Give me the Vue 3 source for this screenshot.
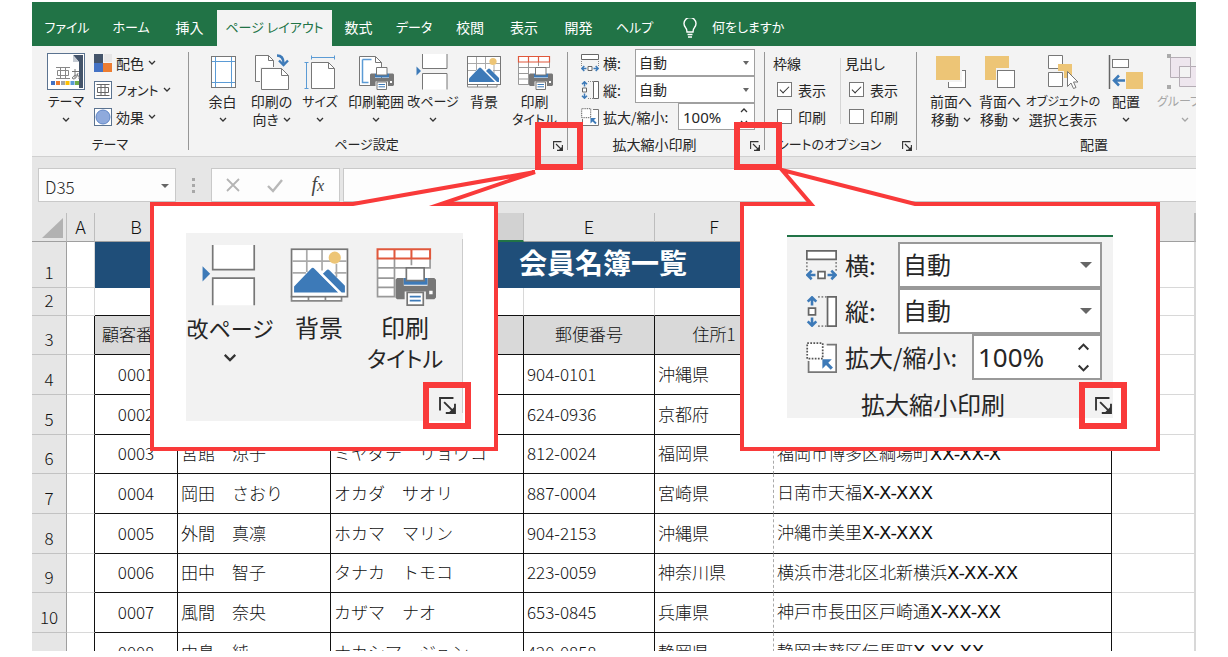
<script setup>
const tabs = ['ファイル', 'ホーム', '挿入', 'ページ レイアウト', '数式', 'データ', '校閲', '表示', '開発', 'ヘルプ']
const activeTab = 'ページ レイアウト'

// Labels made mostly of katakana are set slightly smaller than kanji ones.
const isKana = (text) => /[ァ-ヶー]{3}|サイズ/.test(text)

const smallButtons = [
  { icon: 'i-colors', label: '配色' },
  { icon: 'i-fonts', label: 'フォント' },
  { icon: 'i-effects', label: '効果' },
]

const pageSetup = [
  { icon: 'i-margins', lines: ['余白'], arrow: 'below' },
  { icon: 'i-orient', lines: ['印刷の', '向き'], arrow: 'inline' },
  { icon: 'i-size', lines: ['サイズ'], arrow: 'below' },
  { icon: 'i-area', lines: ['印刷範囲'], arrow: 'below' },
  { icon: 'i-break', lines: ['改ページ'], arrow: 'below' },
  { icon: 'i-background', lines: ['背景'] },
  { icon: 'i-titles', lines: ['印刷', 'タイトル'] },
]

const arrange = [
  { icon: 'i-front', lines: ['前面へ', '移動'], arrow: 'inline' },
  { icon: 'i-back', lines: ['背面へ', '移動'], arrow: 'inline' },
  { icon: 'i-select', lines: ['オブジェクトの', '選択と表示'] },
  { icon: 'i-align', lines: ['配置'], arrow: 'below' },
  { icon: 'i-group', lines: ['グループ化'], arrow: 'below', disabled: true },
]

const zoomed = [
  { icon: 'i-break', lines: ['改ページ'], arrow: 'below' },
  { icon: 'i-background', lines: ['背景'] },
  { icon: 'i-titles', lines: ['印刷', 'タイトル'] },
]

const optionGroups = [
  { key: 'grid', title: '枠線' },
  { key: 'head', title: '見出し' },
]

const columns = ['A', 'B', 'C', 'D', 'E', 'F', 'G', 'H']

const members = [
  { n: 4, id: '0001', name: '', kana: '', zip: '904-0101', pref: '沖縄県', city: '', no: '' },
  { n: 5, id: '0002', name: '', kana: '', zip: '624-0936', pref: '京都府', city: '', no: '' },
  { n: 6, id: '0003', name: '宮館　涼子', kana: 'ミヤダテ　リョウコ', zip: '812-0024', pref: '福岡県', city: '福岡市博多区綱場町', no: 'XX-XX-X' },
  { n: 7, id: '0004', name: '岡田　さおり', kana: 'オカダ　サオリ', zip: '887-0004', pref: '宮崎県', city: '日南市天福', no: 'X-X-XXX' },
  { n: 8, id: '0005', name: '外間　真凛', kana: 'ホカマ　マリン', zip: '904-2153', pref: '沖縄県', city: '沖縄市美里', no: 'X-X-XXX' },
  { n: 9, id: '0006', name: '田中　智子', kana: 'タナカ　トモコ', zip: '223-0059', pref: '神奈川県', city: '横浜市港北区北新横浜', no: 'X-XX-XX' },
  { n: 10, id: '0007', name: '風間　奈央', kana: 'カザマ　ナオ', zip: '653-0845', pref: '兵庫県', city: '神戸市長田区戸崎通', no: 'X-XX-XX' },
  { n: '', id: '0008', name: '中島　純', kana: 'ナカシマ　ジュン', zip: '420-0858', pref: '静岡県', city: '静岡市葵区伝馬町', no: 'X-XX-XX' },
]
</script>

<template>
  <div class="page">
    <svg class="defs" width="0" height="0" aria-hidden="true">
      <symbol id="i-chev" viewBox="0 0 8 5"><path d="M1 1l3 3 3-3" fill="none" stroke="#333" stroke-width="1.3" /></symbol>
      <symbol id="i-launch" viewBox="0 0 10 10">
        <path d="M.6 8V.6H8.500M3 3l5 5M9.400 4V9.400H4" fill="none" stroke="#333" stroke-width="1.100" />
        <path d="M9.400 5.500v3.900H5.500z" fill="#333" />
      </symbol>
      <symbol id="i-theme" viewBox="0 0 38 37">
        <rect x=".5" y=".5" width="37" height="36" fill="#fff" stroke="#5b7390" />
        <rect x="2" y="2" width="34" height="33" fill="#44546a" />
        <path d="M2 2h24l6 7v26H2z" fill="#fff" />
        <path d="M26 2v7h6z" fill="#c5cbd3" />
        <path d="M9 14.500h14M9 25.500h14M13.500 14.500v11M18.500 14.500v11M10.500 17.500h11v5h-11z" fill="none" stroke="#888" />
        <path d="M25 18.500h7M28 16v9M31 20q-1 6-5 6-2-2 3-4 4 0 3 4" fill="none" stroke="#777" />
        <path d="M4 28h4v4H4z" fill="#4472c4" /><path d="M9 28h4v4H9z" fill="#ed7d31" />
        <path d="M14 28h4v4h-4z" fill="#a5a5a5" /><path d="M18.500 28h4v4h-4z" fill="#ffc000" />
        <path d="M23.500 28h4v4h-4z" fill="#5b9bd5" /><path d="M28 28h4v4h-4z" fill="#70ad47" />
      </symbol>
      <symbol id="i-colors" viewBox="0 0 18 18">
        <path d="M0 0h9v9H0z" fill="#44546a" /><path d="M10 0h8v8h-8z" fill="#e7e6e6" />
        <path d="M0 9h9v9H0z" fill="#4472c4" /><path d="M9 9h9v9H9z" fill="#ed7d31" />
      </symbol>
      <symbol id="i-fonts" viewBox="0 0 18 18">
        <rect x=".5" y=".5" width="17" height="17" fill="#fff" stroke="#5b7390" />
        <path d="M2.500 3.500h13M2.500 14.500h13M7 3.500v11M11 3.500v11M3.500 6.500h11v5h-11z" fill="none" stroke="#666" />
      </symbol>
      <symbol id="i-effects" viewBox="0 0 18 18">
        <rect x=".5" y=".5" width="17" height="17" fill="#fff" stroke="#5b7390" />
        <circle cx="9" cy="9" r="7" fill="#8faadc" stroke="#5f86c6" />
      </symbol>
      <symbol id="i-margins" viewBox="0 0 36 36">
        <rect x="6.500" y="2.500" width="24" height="31" fill="#fff" stroke="#777" />
        <path d="M10.500 3v30M26.500 3v30M7 7.500h23M7 28.500h23" stroke="#5b9bd5" fill="none" />
      </symbol>
      <symbol id="i-orient" viewBox="0 0 36 36">
        <path d="M1.500 1.500h13l5 5v21h-18z" fill="#fff" stroke="#777" /><path d="M14.500 1.500v5h5" fill="none" stroke="#777" />
        <path d="M6 13h24v23H6z" fill="#f3f3f3" />
        <path d="M7.500 14.500h20l7 7v14h-27z" fill="#fff" stroke="#777" /><path d="M27.500 14.500v7h7" fill="none" stroke="#777" />
        <path d="M23 1.500q6.500 0 6.500 8" fill="none" stroke="#3d7ab8" stroke-width="2.600" />
        <path d="M25 6.500l4.500 4.500L34 6.500" fill="none" stroke="#3d7ab8" stroke-width="2.400" />
      </symbol>
      <symbol id="i-size" viewBox="0 0 36 36">
        <path d="M9.500 8.500h17l6 6v20h-23z" fill="#fff" stroke="#777" /><path d="M26.500 8.500v6h6" fill="none" stroke="#777" />
        <path d="M9 3.500h24M9.500 1.500v4M32.500 1.500v4M4.500 8v26M2.500 8.500h4M2.500 34.500h4" fill="none" stroke="#5b9bd5" />
      </symbol>
      <symbol id="i-printer" viewBox="0 0 24 24">
        <path d="M1 7.500h4V12h14V7.500h4l1 1V19l-1 1H1l-1-1V8.500z" fill="#777" />
        <path d="M5 7.500h14v4H5z" fill="#3d7ab8" />
        <path d="M6.500 1.500h10.500V9H6.500z" fill="#fff" stroke="#777" />
        <path d="M5.500 15.500h12.500v8.500H5.500z" fill="#f3f3f3" />
        <path d="M7 16h9.500v7.500H7z" fill="#fff" stroke="#777" />
        <path d="M8.500 18.500h6.500M8.500 20.800h6.500" stroke="#3d7ab8" /><path d="M20 15h2v2h-2z" fill="#fff" />
      </symbol>
      <symbol id="i-area" viewBox="0 0 36 36">
        <path d="M1.500 2.500h16l6 6v23h-22z" fill="#fff" stroke="#777" /><path d="M17.500 2.500v6h6" fill="none" stroke="#777" />
        <path d="M4.500 5.500h9M4.500 5.500v23h6" fill="none" stroke="#5b9bd5" stroke-width="1.500" />
        <use href="#i-printer" x="12" y="12" width="24" height="24" />
      </symbol>
      <symbol id="i-break" viewBox="0 0 36 36">
        <path d="M7.500 0v14.500H32V0z" fill="#fff" /><path d="M7.500 35.500V19.500H32v16z" fill="#fff" />
        <path d="M7.500 0v14.500H32V0M7.500 35.500V19.500H32v16" fill="none" stroke="#777" />
        <path d="M1.500 12.500l4.500 4.500-4.500 4.500z" fill="#3d7ab8" />
      </symbol>
      <symbol id="i-background" viewBox="0 0 36 36">
        <path d="M1.500 30v3H31v-3" fill="#fff" stroke="#888" />
        <path d="M11.500 30v3M21.500 30v3" stroke="#888" />
        <rect x="1.500" y="2.500" width="33" height="28" fill="#fff" stroke="#777" />
        <path d="M10.500 3v13M19.500 3v12M28 11v8M2 9.500h32M2 16.500h8M27 16.500h7" fill="none" stroke="#aaa" />
        <circle cx="27" cy="7.500" r="3.600" fill="#edc576" />
        <path d="M3 24.500L13 14q1-1 2 0l14 14H3z" fill="#3d7ab8" />
        <path d="M20 17l2-2q1-1 2 0l9 9v4h-2z" fill="#3d7ab8" /><path d="M18 16L31 29" stroke="#fff" />
      </symbol>
      <symbol id="i-titles" viewBox="0 0 36 36">
        <path d="M1.500 2.500h31v28h-31z" fill="#fff" />
        <path d="M1.500 8v22.500H12M32.500 8v6M1.500 13.500h31M1.500 19.500H12M1.500 25h10M11.500 8v22M21.500 8v4" fill="none" stroke="#999" />
        <path d="M1.500 2.500h31v5.500h-31zM11.500 2.500V8M21.500 2.500V8" fill="#fff" stroke="#e0583c" stroke-width="1.200" />
        <use href="#i-printer" x="12" y="12" width="24" height="24" />
      </symbol>
      <symbol id="i-front" viewBox="0 0 36 36">
        <rect x="15.500" y="16.500" width="17" height="17" fill="#fff" stroke="#777" />
        <path d="M2 1h27v27H2z" fill="#f3f3f3" /><path d="M3 2h24v24H3z" fill="#edc576" />
      </symbol>
      <symbol id="i-back" viewBox="0 0 36 36">
        <path d="M3 2h24v24H3z" fill="#edc576" /><path d="M14 14h20v20H14z" fill="#f3f3f3" />
        <rect x="15.500" y="16.500" width="17" height="17" fill="#fff" stroke="#777" />
      </symbol>
      <symbol id="i-select" viewBox="0 0 36 36">
        <path d="M3.500 1.500h14v13h-14zM3.500 18.500h14v14h-14z" fill="#fff" stroke="#777" />
        <path d="M13 10h14v14h-8v-7h-6z" fill="#edc576" />
        <path d="M22.500 17.500v15l3.500-3.500 2.500 5.500 2.500-1-2.500-5.500h4.500z" fill="#fff" stroke="#777" />
      </symbol>
      <symbol id="i-align" viewBox="0 0 36 36">
        <path d="M1.500 1v34" stroke="#666" stroke-width="1.500" />
        <rect x="4.500" y="5.500" width="16" height="8" fill="#fff" stroke="#777" />
        <path d="M18 18h17v17H18z" fill="#edc576" />
        <path d="M17 26.500H6M11 21.500l-5 5 5 5" fill="none" stroke="#3d7ab8" stroke-width="2.500" />
      </symbol>
      <symbol id="i-group" viewBox="0 0 36 36">
        <path d="M3.500 3.500h20v20h-20zM12.500 12.500h20v20h-20z" fill="#eee6ee" stroke="#b5adb5" />
        <path d="M12.500 12.500h11v11h-11z" fill="#f3f3f3" stroke="#b5adb5" />
        <path d="M0 0h4v4H0zM30 0h4v4h-4zM0 31h4v4H0zM30 31h4v4h-4z" fill="#aaa" />
      </symbol>
      <symbol id="i-width" viewBox="0 0 18 18">
        <path d="M.5.5h17v5H.5z" fill="#fff" stroke="#666" />
        <path d="M.5 7v5M17.500 7v5" stroke="#888" stroke-dasharray="1 1" />
        <path d="M7 12.500h4v4H7z" fill="#fff" stroke="#666" />
        <path d="M5.500 14.500H1M3.300 12L.8 14.500l2.500 2.500M12.500 14.500H17M14.700 12l2.500 2.500-2.500 2.500" fill="none" stroke="#3d7ab8" stroke-width="1.500" />
      </symbol>
      <symbol id="i-height" viewBox="0 0 18 18">
        <path d="M12.500.5h5v17h-5z" fill="#fff" stroke="#666" />
        <path d="M7 .5h5M7 17.500h5" stroke="#888" stroke-dasharray="1 1" />
        <path d="M1.500 7h4v4h-4z" fill="#fff" stroke="#666" />
        <path d="M3.500 5.500V1M1 3.300L3.500.8 6 3.300M3.500 12.500V17M1 14.700l2.500 2.500L6 14.700" fill="none" stroke="#3d7ab8" stroke-width="1.500" />
      </symbol>
      <symbol id="i-scale" viewBox="0 0 18 18">
        <path d="M1.500 11v6.500h16v-16H12" fill="#fff" stroke="#777" />
        <path d="M.7.7h9v9h-9z" fill="#fff" stroke="#555" stroke-width="1" stroke-dasharray="1 .8" />
        <path d="M15 15.500l-4.500-4.500" stroke="#3d7ab8" stroke-width="1.800" /><path d="M9.500 10h5.500L9.500 15.500z" fill="#3d7ab8" />
      </symbol>
    </svg>

    <main class="excel">
      <nav class="menu">
        <div class="tabs">
          <button v-for="t in tabs" :key="t" type="button" :class="{ active: t === activeTab, kana: isKana(t) }">{{ t }}</button>
        </div>
        <svg class="bulb" viewBox="0 0 16 20" aria-hidden="true">
          <path d="M5 14q0-3-1.500-4.500a6 6 0 1 1 9 0Q11 11 11 14zM5.500 16.500h5M6 19h4" fill="none" stroke="#fff" stroke-width="1.400" />
        </svg>
        <button type="button" class="tell kana">何をしますか</button>
      </nav>

      <section class="ribbon">
        <div class="group theme">
          <div class="body">
            <button type="button" class="big">
              <svg class="ticon"><use href="#i-theme" /></svg>
              <span class="kana">テーマ</span><span><svg class="chev"><use href="#i-chev" /></svg></span>
            </button>
            <div class="smalls">
              <button v-for="b in smallButtons" :key="b.label" type="button" :class="{ kana: isKana(b.label) }">
                <svg class="sicon"><use :href="'#' + b.icon" /></svg>{{ b.label }}<svg class="chev"><use href="#i-chev" /></svg>
              </button>
            </div>
          </div>
          <div class="caption kana"><span>テーマ</span></div>
        </div>
        <i class="sep"></i>

        <div class="group setup">
          <div class="body">
            <button v-for="b in pageSetup" :key="b.icon" type="button" class="big">
              <svg class="icon"><use :href="'#' + b.icon" /></svg>
              <span v-for="(l, i) in b.lines" :key="l" :class="{ kana: isKana(l) }">{{ l }}<svg v-if="b.arrow === 'inline' && i === 1" class="chev"><use href="#i-chev" /></svg></span>
              <span v-if="b.arrow === 'below'"><svg class="chev"><use href="#i-chev" /></svg></span>
            </button>
          </div>
          <div class="caption kana"><span>ページ設定</span>
            <button type="button" class="launch" aria-label="ページ設定"><svg><use href="#i-launch" /></svg></button></div>
        </div>
        <i class="sep"></i>

        <div class="group scaling">
          <div class="scale">
            <div class="srow">
              <svg class="sc"><use href="#i-width" /></svg><label for="w1">横:</label>
              <div class="drop"><select id="w1"><option>自動</option></select><i></i></div>
            </div>
            <div class="srow">
              <svg class="sc"><use href="#i-height" /></svg><label for="h1">縦:</label>
              <div class="drop"><select id="h1"><option>自動</option></select><i></i></div>
            </div>
            <div class="srow">
              <svg class="sc"><use href="#i-scale" /></svg><label for="s1">拡大/縮小:</label>
              <div class="spin"><input id="s1" type="text" value="100%" /><span><svg class="up"><use href="#i-chev" /></svg><svg><use href="#i-chev" /></svg></span></div>
            </div>
          </div>
          <div class="caption"><span>拡大縮小印刷</span>
            <button type="button" class="launch" aria-label="拡大縮小印刷"><svg><use href="#i-launch" /></svg></button></div>
        </div>
        <i class="sep"></i>

        <div class="group options">
          <div class="body">
            <div v-for="g in optionGroups" :key="g.key" class="opts">
              <span>{{ g.title }}</span>
              <label><input type="checkbox" checked />表示</label>
              <label><input type="checkbox" />印刷</label>
            </div>
          </div>
          <div class="caption kana"><span>シートのオプション</span>
            <button type="button" class="launch" aria-label="シートのオプション"><svg><use href="#i-launch" /></svg></button></div>
        </div>
        <i class="sep"></i>

        <div class="group arrange">
          <div class="body">
            <button v-for="b in arrange" :key="b.icon" type="button" class="big" :class="{ off: b.disabled }">
              <svg class="icon"><use :href="'#' + b.icon" /></svg>
              <span v-for="(l, i) in b.lines" :key="l" :class="{ kana: isKana(l) }">{{ l }}<svg v-if="b.arrow === 'inline' && i === 1" class="chev"><use href="#i-chev" /></svg></span>
              <span v-if="b.arrow === 'below'"><svg class="chev"><use href="#i-chev" /></svg></span>
            </button>
          </div>
          <div class="caption"><span>配置</span></div>
        </div>
      </section>

      <section class="formula">
        <div class="namebox"><input type="text" value="D35" aria-label="名前ボックス" /><i></i></div>
        <div class="dots"><i></i><i></i><i></i></div>
        <div class="fx">
          <button type="button" aria-label="キャンセル"><svg viewBox="0 0 16 16"><path d="M2 2l12 12M14 2L2 14" fill="none" stroke="#b4b4b4" stroke-width="1.800" /></svg></button>
          <button type="button" aria-label="入力"><svg viewBox="0 0 16 16"><path d="M1 9l5 5L15 3" fill="none" stroke="#b8b8b8" stroke-width="2.400" /></svg></button>
          <button type="button" class="fn">f<small>x</small></button>
        </div>
        <input type="text" class="entry" aria-label="数式バー" />
      </section>

      <section class="sheet">
        <table>
          <colgroup>
            <col class="c0" /><col class="ca" /><col class="cb" /><col class="cc" /><col class="cd" />
            <col class="ce" /><col class="cf" /><col class="cg" /><col class="ch" /><col />
          </colgroup>
          <thead>
            <tr>
              <th class="corner"><i></i></th>
              <th v-for="c in columns" :key="c" :class="{ sel: c === 'D' }">{{ c === 'G' || c === 'H' ? '' : c }}</th>
              <th></th>
            </tr>
          </thead>
          <tbody>
            <tr class="r1"><th>1</th><td></td><td colspan="6" class="title">会員名簿一覧</td><td></td><td></td></tr>
            <tr class="r2"><th>2</th><td></td><td></td><td></td><td></td><td></td><td></td><td></td><td></td><td></td></tr>
            <tr class="r3"><th>3</th><td class="a"></td>
              <td class="hd k">顧客番号</td><td class="hd k"></td><td class="hd k"></td><td class="hd k">郵便番号</td><td class="hd k brk">住所1</td><td class="hd k"></td><td></td><td></td></tr>
            <tr v-for="m in members" :key="m.id" class="rm">
              <th>{{ m.n }}</th><td class="a"></td>
              <td class="k id">{{ m.id }}</td><td class="k">{{ m.name }}</td><td class="k">{{ m.kana }}</td>
              <td class="k">{{ m.zip }}</td><td class="k brk">{{ m.pref }}</td>
              <td class="k">{{ m.city }}<span class="no">{{ m.no }}</span></td><td></td><td></td>
            </tr>
          </tbody>
        </table>
      </section>
    </main>

    <div class="mark mark-setup"></div>
    <div class="mark mark-scale"></div>

    <aside class="callout left">
      <svg class="shape" width="392" height="290" aria-hidden="true"><path d="M2 38H203L385 6L291 38H346V283H2Z" fill="#fff" stroke="#f93a3a" stroke-width="4" stroke-miterlimit="8" /></svg>
      <div class="panel">
        <div class="cols">
          <button v-for="b in zoomed" :key="b.icon" type="button" class="big">
            <svg class="icon"><use :href="'#' + b.icon" /></svg>
            <span v-for="l in b.lines" :key="l" :class="{ kana: isKana(l) }">{{ l }}</span>
            <span v-if="b.arrow === 'below'"><svg class="chev"><use href="#i-chev" /></svg></span>
          </button>
        </div>
      </div>
      <button type="button" class="hot" aria-label="ページ設定"><svg><use href="#i-launch" /></svg></button>
    </aside>

    <aside class="callout right">
      <svg class="shape" width="424" height="296" aria-hidden="true"><path d="M2 44H71L42 10L175 44H418V289H2Z" fill="#fff" stroke="#f93a3a" stroke-width="4" /></svg>
      <div class="panel">
        <div class="scale">
          <div class="srow">
            <svg class="sc"><use href="#i-width" /></svg><label for="w2">横:</label>
            <div class="drop"><select id="w2"><option>自動</option></select><i></i></div>
          </div>
          <div class="srow">
            <svg class="sc"><use href="#i-height" /></svg><label for="h2">縦:</label>
            <div class="drop"><select id="h2"><option>自動</option></select><i></i></div>
          </div>
          <div class="srow">
            <svg class="sc"><use href="#i-scale" /></svg><label for="s2">拡大/縮小:</label>
            <div class="spin"><input id="s2" type="text" value="100%" /><span><svg class="up"><use href="#i-chev" /></svg><svg><use href="#i-chev" /></svg></span></div>
          </div>
        </div>
        <p>拡大縮小印刷</p>
      </div>
      <button type="button" class="hot" aria-label="拡大縮小印刷"><svg><use href="#i-launch" /></svg></button>
    </aside>
  </div>
</template>

<style>
body { margin: 0; background: #fff; }
</style>

<style scoped>
* { box-sizing: border-box; }
.page {
  position: relative;
  height: 100vh;
  padding: 2px 32px 6px;
  overflow: hidden;
  font-family: "Noto Sans CJK JP", sans-serif;
  font-feature-settings: "palt";
  font-size: 14px;
  line-height: 18px;
  color: #262626;
}
.defs { position: absolute; }
button, input, select { font: inherit; font-feature-settings: inherit; color: inherit; margin: 0; padding: 0; border: 0; background: none; border-radius: 0; outline: 0; }
button { white-space: nowrap; }
svg { flex: none; }
.excel { display: flex; flex-direction: column; height: 100%; overflow: hidden; background: #e6e6e6; }

.menu { display: flex; align-items: flex-end; height: 44px; flex: none; background: #217346; color: #fff; padding-left: 2px; }
.tabs { display: grid; grid-template-columns: 66px 62px 55px 115px 53px 58px 54px 54px 55px 57px; height: 36px; }
.menu button { padding-bottom: 2px; }
.tabs .active { background: #f3f3f3; color: #217346; }
.bulb { width: 16px; height: 20px; margin: 0 14px 8px 19px; }
.tell { height: 36px; }

.ribbon { display: flex; flex: none; height: 111px; overflow: hidden; background: #f3f3f3; border-bottom: 1px solid #d0d0d0; }
.group { display: flex; flex-direction: column; justify-content: space-between; flex: none; }
.sep { width: 1px; flex: none; margin: 6px 0; background: #969696; }
.caption { display: flex; align-items: center; height: 22px; padding-bottom: 2px; }
.caption span { flex: 1; text-align: center; }
.launch { width: 23px; height: 18px; }
.launch svg { display: block; width: 10px; height: 10px; margin: 3px 0 0 9px; }
.body { display: flex; }
.big { display: flex; flex-direction: column; align-items: center; line-height: 18px; }
.big > span { display: flex; align-items: center; justify-content: center; gap: 4px; min-height: 18px; }
.kana, .big > .kana { font-size: 13px; }
.icon { width: 36px; height: 36px; margin: 8px 0 2px; }
.chev { width: 8px; height: 5px; }
.off { color: #a6a6a6; }
.off .chev { opacity: .4; }
.theme { width: 156px; }
.theme .body { padding-left: 15px; gap: 9px; }
.ticon { width: 38px; height: 37px; margin: 7px 0 2px; }
.smalls { display: flex; flex-direction: column; padding-top: 3px; }
.smalls button { display: flex; align-items: center; gap: 4px; height: 27px; }
.sicon { width: 18px; height: 18px; }
.setup { width: 378px; }
.setup .body { display: grid; grid-template-columns: 49px 49px 48px 64px 50px 52px 49px; padding-left: 9px; justify-items: center; align-items: start; }
.scaling { width: 196px; }
.options { width: 151px; }
.arrange { width: 354px; }
.arrange .body { display: grid; grid-template-columns: 50px 48px 78px 48px 70px; padding-left: 9px; justify-items: center; align-items: start; }
.arrange .kana { font-size: 12px; }

.scaling .scale { padding: 3px 9px 0 13px; }
.srow { display: flex; align-items: center; height: 27px; gap: 4px; }
.sc { width: 18px; height: 18px; }
.srow label { flex: 1; white-space: nowrap; }
.drop, .spin { position: relative; height: 100%; background: #fff; border: 1px solid #a0a0a0; flex: none; }
.drop { width: 120px; }
.drop select { appearance: none; width: 100%; height: 100%; padding: 0 0 1px 3px; }
.drop i, .namebox i { position: absolute; right: 5px; top: 11px; border: 3px solid transparent; border-top: 4px solid #666; border-bottom: 0; }
.spin { width: 77px; display: flex; }
.spin input { width: 100%; min-width: 0; padding-left: 4px; font-family: "Noto Sans", sans-serif; font-size: 15px; }
.spin span { display: flex; flex-direction: column; justify-content: space-around; padding-right: 6px; }
.spin svg { width: 8px; height: 5px; display: block; }
.up { transform: rotate(180deg); }

.opts { display: flex; flex-direction: column; width: 75px; padding: 3px 0 0 8px; }
.opts > * { display: flex; align-items: center; height: 27px; gap: 6px; }
.opts label { padding-left: 4px; }
.opts + .opts { padding-left: 5px; background: linear-gradient(#d5d5d5, #d5d5d5) 0 12px / 1px 66px no-repeat; }
.opts input { appearance: none; width: 15px; height: 15px; flex: none; border: 1px solid #777; background: #fff; display: grid; place-items: center; }
.opts input:checked::before { content: ""; width: 8px; height: 4px; margin-bottom: 3px; border: solid #333; border-width: 0 0 1px 1px; transform: rotate(-45deg); }

.formula { display: flex; flex: none; height: 34px; margin: 11px 0 11px 6px; }
.formula > * { background: #fdfdfd; border: 1px solid #c9c9c9; }
.namebox { position: relative; width: 138px; }
.namebox input { width: 100px; height: 100%; padding: 2px 0 0 6px; font-size: 17px; font-weight: 300; }
.namebox i { top: 15px; right: 6px; border-width: 4px 4px 0; }
.formula .dots { width: 35px; display: flex; flex-direction: column; align-items: center; justify-content: center; gap: 3px; background: none; border: 0; }
.dots i { width: 3px; height: 3px; background: #a8a8a8; }
.fx { width: 129px; display: flex; }
.fx button { flex: 1; }
.fx svg { width: 16px; height: 16px; display: block; margin: 0 auto; }
.fx .fn { font: italic 20px "Liberation Serif", serif; color: #444; padding-bottom: 2px; }
.fx small { font-size: 16px; }
.formula .entry { flex: 1; min-width: 0; margin-left: 3px; border-right: 0; }

.sheet { flex: 1; min-height: 0; overflow: hidden; }
table { table-layout: fixed; width: 100%; border-collapse: separate; border-spacing: 0; background: #fff; font-size: 17px; font-weight: 300; font-feature-settings: normal; color: #111; }
.c0 { width: 35px; } .ca { width: 28px; } .cb { width: 83px; } .cc { width: 153px; } .cd { width: 193px; }
.ce { width: 131px; } .cf { width: 119px; } .cg { width: 338px; } .ch { width: 83px; }
th { font-weight: 300; padding: 0; background: #e6e6e6; border-right: 1px solid #9f9f9f; line-height: 20px; }
thead th { height: 29px; padding-bottom: 2px; border-right-color: #bdbdbd; border-bottom: 1px solid #9f9f9f; font-size: 18px; }
thead .sel { background: #d2d2d2; border-bottom: 2px solid #217346; }
.corner i { display: block; width: 21px; height: 20px; margin: 4px 0 0 10px; background: #b2b2b2; clip-path: polygon(100% 0, 100% 100%, 0 100%); }
tbody th { vertical-align: bottom; padding-bottom: 5px; border-bottom: 1px solid #c2c2c2; }
td { padding: 0 3px 2px; white-space: nowrap; overflow: hidden; line-height: 20px; border-right: 1px solid #d8d8d8; border-bottom: 1px solid #d8d8d8; }
.r1 > * { height: 46px; }
.r2 > * { height: 28px; }
.r3 > * { height: 39px; }
.r2 td:nth-child(n+3):nth-child(-n+8) { border-bottom-color: #111; }
td.title { padding: 0 0 6px; text-align: center; color: #fff; background: #1f4e79; border-color: #1f4e79; font-size: 28px; font-weight: 700; line-height: 36px; }
.a { border-right-color: #111; }
.k { border-color: #111; }
.hd { background: #d9d9d9; text-align: center; }
.brk { border-right: 1px dashed #aaa; }
.id { text-align: center; }
.rm > * { height: 40px; }
.rm:nth-child(3n) > * { height: 39px; }
.no { font-family: "DejaVu Sans", sans-serif; font-size: 18px; font-weight: 400; }

.mark { position: absolute; top: 122px; width: 48px; height: 48px; border: 6px solid #f93a3a; }
.mark-setup { left: 535px; }
.mark-scale { left: 734px; }
.callout { position: absolute; font-size: 24px; line-height: 30px; }
.shape { position: absolute; left: 0; top: 0; }
.left { left: 150px; top: 166px; padding: 67px 0 0 36px; }
.right { left: 740px; top: 160px; padding: 75px 0 0 47px; }
.panel { position: relative; background: #f2f2f2; }
.left .panel { width: 277px; height: 188px; background: linear-gradient(#ccc, #ccc) right 6px / 1px 174px no-repeat #f2f2f2; }
.cols { display: grid; grid-template-columns: 88px 90px 82px; justify-items: center; align-items: start; padding-top: 12px; }
.cols .big { line-height: 30px; }
.cols .big > span { min-height: 30px; }
.cols .big > .kana { font-size: 22px; }
.cols .icon { width: 61px; height: 61px; margin: 0 0 6px; }
.cols .chev { width: 14px; height: 9px; }
.right .panel { width: 326px; height: 183px; border-top: 2px solid #217346; padding: 5px 11px 0 19px; }
.right .srow { height: 46px; gap: 8px; }
.right .sc { width: 31px; height: 31px; }
.right .drop, .right .spin { border: 2px solid #999; }
.right .drop { width: 204px; }
.right .drop select { padding: 0 0 2px 3px; }
.right .drop i { right: 8px; top: 18px; border-width: 6px 6px 0; }
.right .spin { width: 130px; }
.right .spin input { font-size: 26px; }
.right .spin span { padding-right: 10px; }
.right .spin svg { width: 13px; height: 8px; }
.right p { margin: 12px 0 0; padding-right: 42px; line-height: 24px; text-align: center; }
.hot { position: absolute; width: 48px; height: 47px; border: 6px solid #f93a3a; }
.hot svg { display: block; width: 17px; height: 17px; margin: 0 auto 0 10px; }
.left .hot { left: 273px; top: 216px; }
.right .hot { left: 339px; top: 222px; }
</style>
